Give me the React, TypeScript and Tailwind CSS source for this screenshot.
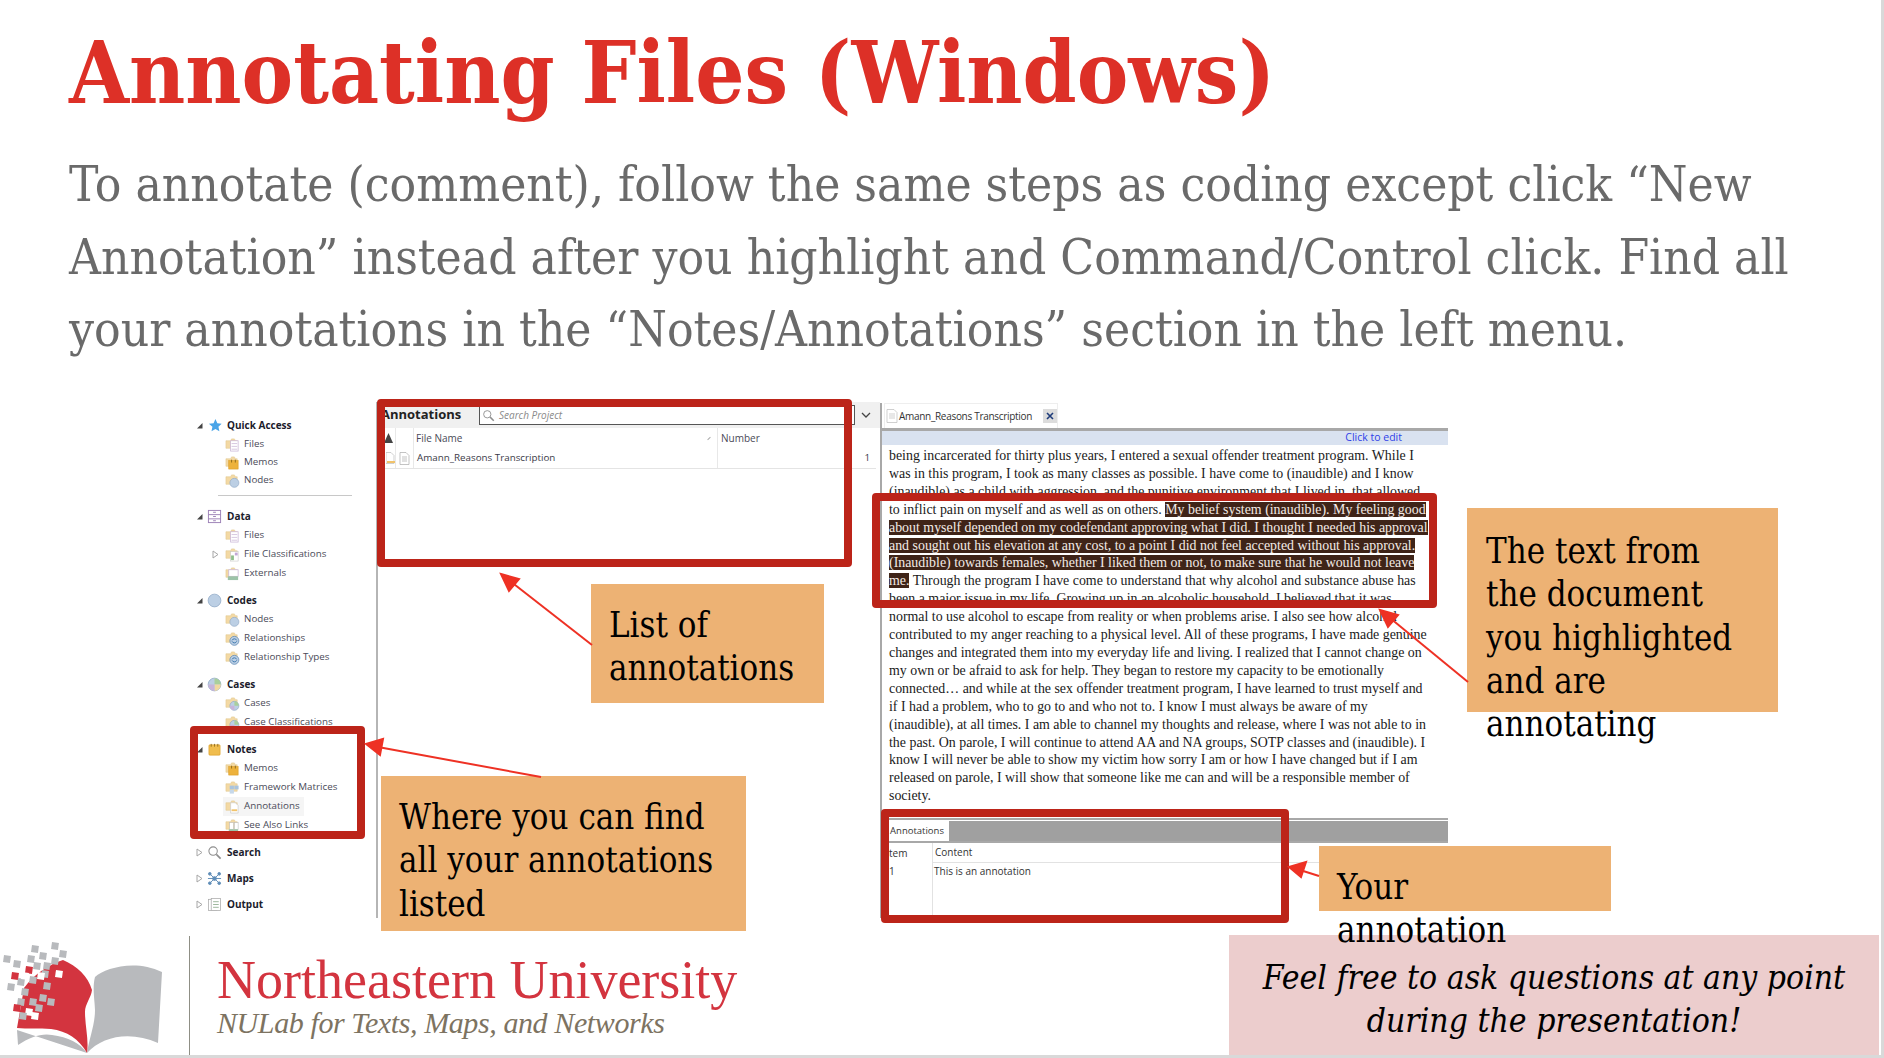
import React from "react";

const serif = "font-['Liberation_Serif',serif]";
const slide = "font-['DejaVu_Serif_Condensed','DejaVu_Serif',serif]";
const ui = "font-['Open_Sans',sans-serif]";

type IconKind =
  | "star"
  | "files"
  | "memo"
  | "node"
  | "cabinet"
  | "classes"
  | "external"
  | "circle"
  | "rel"
  | "pie"
  | "casefolder"
  | "notes"
  | "matrix"
  | "annot"
  | "links"
  | "search"
  | "maps"
  | "output";

const Folder = () => (
  <path d="M1 4h5l1-2h3l1 2h2v8H1z" fill="#f3d9a4" stroke="#e3c78e" strokeWidth="0.6" />
);

// small tree icons, rough copies of the NVivo ones
const NavIcon = ({ kind, size = 16 }: { kind: IconKind; size?: number }) => (
  <svg width={size} height={size} viewBox="0 0 16 16" className="shrink-0">
    {kind === "star" && (
      <path d="M9 1l2 4.6 4.6.5-3.4 3.2 1 4.7L9 11.6 4.800 14l1-4.700L2 6.100l5-.5z" fill="#4aa5e8" />
    )}
    {kind === "files" && (
      <>
        <Folder />
        <rect x="6" y="4" width="8" height="11" fill="#fff" stroke="#c9b5d6" strokeWidth="0.8" />
        <path d="M7 7h6M7 10h6M7 13h6" stroke="#c9b5d6" strokeWidth="0.8" />
      </>
    )}
    {kind === "memo" && (
      <>
        <Folder />
        <rect x="4" y="6" width="10" height="9" fill="#edb23c" stroke="#d99a22" strokeWidth="0.6" />
        <path d="M7 5v3M11 5v3" stroke="#8c6a1c" strokeWidth="1" />
      </>
    )}
    {kind === "node" && (
      <>
        <Folder />
        <circle cx="10" cy="10.500" r="4.800" fill="#bccfe4" stroke="#8fa8c6" strokeWidth="0.7" />
      </>
    )}
    {kind === "cabinet" && (
      <g fill="none" stroke="#9b7fb5" strokeWidth="1">
        <rect x="1.500" y="1.500" width="13" height="13" />
        <path d="M1.500 6h13M1.500 10.500h13M6.500 3.500h3M6.500 8h3M6.500 12.500h3" />
      </g>
    )}
    {kind === "classes" && (
      <>
        <Folder />
        <rect x="6" y="5" width="8" height="10" fill="#fff" stroke="#c5c5c5" strokeWidth="0.6" />
        <rect x="6.500" y="9" width="3" height="5" fill="#8fbf8b" />
        <rect x="10.500" y="6" width="3" height="3" fill="#c2a8d6" />
      </>
    )}
    {kind === "external" && (
      <>
        <Folder />
        <rect x="4" y="4" width="10" height="7" fill="#fff" stroke="#c9b5d6" strokeWidth="0.8" />
        <rect x="3" y="11" width="11" height="4" fill="#9cc3a8" />
      </>
    )}
    {kind === "circle" && <circle cx="8" cy="8" r="6.800" fill="#bccfe4" stroke="#8fa8c6" strokeWidth="0.8" />}
    {kind === "rel" && (
      <>
        <Folder />
        <circle cx="10" cy="10.500" r="4.800" fill="#bccfe4" stroke="#5c88b5" strokeWidth="0.8" />
        <path d="M7.500 10a2.700 2.700 0 0 1 5 0M12.500 11a2.700 2.700 0 0 1-5 0" fill="none" stroke="#3a76ad" strokeWidth="1" />
      </>
    )}
    {kind === "pie" && (
      <>
        <circle cx="8" cy="8" r="6.800" fill="#bccfe4" stroke="#8fa8c6" strokeWidth="0.8" />
        <path d="M8 8V1.200A6.800 6.800 0 0 1 14.800 8z" fill="#a9cf9c" />
        <path d="M8 8h6.800A6.800 6.800 0 0 1 8 14.800z" fill="#f1d9a0" />
        <path d="M8 8v6.800A6.800 6.800 0 0 1 1.200 8z" fill="#c8b4da" />
      </>
    )}
    {kind === "casefolder" && (
      <>
        <Folder />
        <circle cx="10" cy="10.500" r="4.800" fill="#bccfe4" stroke="#8fa8c6" strokeWidth="0.7" />
        <path d="M10 10.500V5.700a4.800 4.800 0 0 1 4.800 4.800z" fill="#a9cf9c" />
        <path d="M10 10.500v4.800a4.800 4.800 0 0 1-4.800-4.800z" fill="#c8b4da" />
      </>
    )}
    {kind === "notes" && (
      <>
        <rect x="2" y="3" width="12" height="11" rx="1" fill="#f0bd4e" stroke="#d99a22" strokeWidth="0.6" />
        <path d="M4.500 2v3M8 2v3M11.500 2v3" stroke="#8c6a1c" strokeWidth="0.9" />
      </>
    )}
    {kind === "matrix" && (
      <>
        <Folder />
        <rect x="5" y="6" width="4.500" height="4" fill="#a9c4df" />
        <rect x="10" y="6" width="4.500" height="4" fill="#a9c4df" />
        <rect x="5" y="10.500" width="4.500" height="4" fill="#c6d8ea" />
      </>
    )}
    {kind === "annot" && (
      <>
        <Folder />
        <path d="M6 4h5l3 3v8H6z" fill="#fff" stroke="#c9c9c9" strokeWidth="0.7" />
        <rect x="7" y="11" width="6" height="2" fill="#f1c36b" />
      </>
    )}
    {kind === "links" && (
      <>
        <Folder />
        <rect x="5" y="5" width="4" height="7" fill="#fff" stroke="#bbb" strokeWidth="0.6" />
        <rect x="10" y="5" width="4" height="7" fill="#fff" stroke="#bbb" strokeWidth="0.6" />
        <rect x="4" y="12" width="10" height="3" fill="#9cc3a8" />
      </>
    )}
    {kind === "search" && (
      <g fill="none" stroke="#8e8e8e">
        <circle cx="6.500" cy="6.500" r="4.500" strokeWidth="1.100" />
        <path d="M10 10l4.500 4.500" strokeWidth="1.800" />
      </g>
    )}
    {kind === "maps" && (
      <g stroke="#5f8db8" fill="#5f8db8" strokeWidth="1">
        <path d="M8 8L3 3M8 8l5-5M8 8l-5 5M8 8l5 5M8 8H1M8 8h7" />
        <circle cx="8" cy="8" r="2" />
        <circle cx="3" cy="3" r="1.400" />
        <circle cx="13" cy="3" r="1.400" />
        <circle cx="3" cy="13" r="1.400" />
        <circle cx="13" cy="13" r="1.400" />
      </g>
    )}
    {kind === "output" && (
      <g fill="#fff" stroke="#a9a9a9" strokeWidth="0.8">
        <rect x="1.500" y="2.500" width="9" height="12" />
        <rect x="4.500" y="1.500" width="10" height="13" />
        <path d="M6.500 5h6M6.500 8h6M6.500 11h6" stroke="#7fa27f" />
      </g>
    )}
  </svg>
);

const Caret = ({ open }: { open?: boolean }) =>
  open ? (
    <svg width="7" height="7" viewBox="0 0 7 7" className="shrink-0">
      <path d="M6.500 1v5.500H1z" fill="#444" />
    </svg>
  ) : (
    <svg width="7" height="9" viewBox="0 0 7 9" className="shrink-0">
      <path d="M1 1l5 3.500L1 8z" fill="#fff" stroke="#a6a6a6" />
    </svg>
  );

const NavHead = ({ icon, label, open }: { icon: IconKind; label: string; open?: boolean }) => (
  <div className="flex items-center h-[19px]">
    <span className="w-[11px] flex justify-start">
      <Caret open={open} />
    </span>
    <span className="w-[20px] flex justify-start">
      <NavIcon kind={icon} size={15} />
    </span>
    <span className="text-[10px] font-bold text-[#1c1c2c]">{label}</span>
  </div>
);

const NavChild = ({
  icon,
  label,
  caret,
  active,
  tight,
}: {
  icon: IconKind;
  label: string;
  caret?: boolean;
  active?: boolean;
  tight?: boolean;
}) => (
  <div className={`flex items-center pl-[16px] ${tight ? "h-[18px]" : "h-[19px]"}`}>
    <span className="w-[11px]">{caret && <Caret />}</span>
    <span className={`flex items-center h-full pr-[4px] text-[9.800px] text-[#4a4a58] ${active ? "bg-[#f5f5f5]" : ""}`}>
      <span className="w-[21px] pl-[2px] flex">
        <NavIcon kind={icon} size={15} />
      </span>
      {label}
    </span>
  </div>
);

const Sidebar = () => (
  <div className={`w-[180px] pl-[6px] pt-[24px] flex flex-col shrink-0 ${ui}`}>
    <NavHead icon="star" label="Quick Access" open />
    <NavChild icon="files" label="Files" tight />
    <NavChild icon="memo" label="Memos" tight />
    <NavChild icon="node" label="Nodes" tight />
    <div className="h-px w-[134px] ml-[22px] bg-[#c8c8c8] mt-[6px] mb-[11px]" />
    <NavHead icon="cabinet" label="Data" open />
    <NavChild icon="files" label="Files" />
    <NavChild icon="classes" label="File Classifications" caret />
    <NavChild icon="external" label="Externals" />
    <div className="h-[8px]" />
    <NavHead icon="circle" label="Codes" open />
    <NavChild icon="node" label="Nodes" />
    <NavChild icon="rel" label="Relationships" />
    <NavChild icon="rel" label="Relationship Types" />
    <div className="h-[8px]" />
    <NavHead icon="pie" label="Cases" open />
    <NavChild icon="casefolder" label="Cases" />
    <NavChild icon="casefolder" label="Case Classifications" />
    <div className="h-[8px]" />
    <NavHead icon="notes" label="Notes" open />
    <NavChild icon="memo" label="Memos" />
    <NavChild icon="matrix" label="Framework Matrices" />
    <NavChild icon="annot" label="Annotations" active />
    <NavChild icon="links" label="See Also Links" />
    <div className="h-[8px]" />
    <NavHead icon="search" label="Search" />
    <div className="h-[7px]" />
    <NavHead icon="maps" label="Maps" />
    <div className="h-[7px]" />
    <NavHead icon="output" label="Output" />
  </div>
);

const ListPanel = () => (
  <div className={`w-[504px] h-[516px] shrink-0 border-l-2 border-[#b5b5b5] mt-[10px] ${ui}`}>
    <div className="h-[26px] bg-[#f0f0f0] flex items-center">
      <span className="w-[101px] pl-[3px] text-[13px] font-bold text-[#222]">Annotations</span>
      <div className="w-[376px] h-[20px] border border-[#555] bg-white flex items-center pl-[2px] gap-[4px]">
        <NavIcon kind="search" size={13} />
        <span className="italic text-[10px] text-[#8a8a8a]">Search Project</span>
      </div>
      <svg width="10" height="6" viewBox="0 0 10 6" className="ml-[6px]">
        <path d="M1 1l4 4 4-4" fill="none" stroke="#444" strokeWidth="1.300" />
      </svg>
    </div>
    <div className="flex h-[21px] w-[498px] items-center text-[10px] text-[#4a4a58]">
      <span className="w-[18px] h-full border-r border-[#e8e8e8] flex items-center justify-end pr-[2px]">
        <svg width="9" height="11" viewBox="0 0 9 11">
          <path d="M4.500 0L9 10H0z" fill="#444" />
        </svg>
      </span>
      <span className="w-[18px] h-full border-r border-[#e8e8e8]" />
      <span className="w-[304px] h-full pl-[2px] pr-[6px] border-r border-[#e8e8e8] flex items-center justify-between">
        File Name
        <span className="w-[4px] h-px bg-[#aaa] -rotate-45" />
      </span>
      <span className="pl-[3px]">Number</span>
    </div>
    <div className="flex h-[20px] w-[498px] items-center text-[9.800px] text-[#3a3a48] border-b border-[#e4e4e4]">
      <span className="w-[18px] h-full border-r border-[#e8e8e8] flex items-center justify-end">
        <svg width="9" height="13" viewBox="0 0 9 13">
          <path d="M0 .5h5l3 3v8H0z" fill="#fff" stroke="#bbb" strokeWidth="0.7" />
          <rect x="1" y="9" width="8" height="2" fill="#f1c36b" />
        </svg>
      </span>
      <span className="w-[18px] h-full border-r border-[#e8e8e8] flex items-center justify-center">
        <svg width="11" height="13" viewBox="0 0 11 13">
          <path d="M1 .5h6l3 3v9H1zM3 5h5M3 7h5M3 9h5" fill="#fff" stroke="#aaa" strokeWidth="0.7" />
        </svg>
      </span>
      <span className="w-[304px] h-full pl-[3px] border-r border-[#e8e8e8] flex items-center">Amann_Reasons Transcription</span>
      <span className="flex-1 text-right pr-[6px]">1</span>
    </div>
  </div>
);

const hl = "bg-[#3f2418] text-[#f3ebe6]";

const DocLines = () => (
  <div className={`pl-[7px] text-[13.900px] leading-[17.900px] text-[#1a1a1a] whitespace-nowrap ${serif}`}>
    <div>being incarcerated for thirty plus years, I entered a sexual offender treatment program. While I</div>
    <div>was in this program, I took as many classes as possible. I have come to (inaudible) and I know</div>
    <div>(inaudible) as a child with aggression, and the punitive environment that I lived in, that allowed</div>
    <div>
      to inflict pain on myself and as well as on others. <span className={hl}>My belief system (inaudible). My feeling good</span>
    </div>
    <div>
      <span className={hl}>about myself depended on my codefendant approving what I did. I thought I needed his approval</span>
    </div>
    <div>
      <span className={hl}>and sought out his elevation at any cost, to a point I did not feel accepted without his approval.</span>
    </div>
    <div>
      <span className={hl}>(Inaudible) towards females, whether I liked them or not, to make sure that he would not leave</span>
    </div>
    <div>
      <span className={hl}>me.</span> Through the program I have come to understand that why alcohol and substance abuse has
    </div>
    <div>been a major issue in my life. Growing up in an alcoholic household, I believed that it was</div>
    <div>normal to use alcohol to escape from reality or when problems arise. I also see how alcohol</div>
    <div>contributed to my anger reaching to a physical level. All of these programs, I have made genuine</div>
    <div>changes and integrated them into my everyday life and living. I realized that I cannot change on</div>
    <div>my own or be afraid to ask for help. They began to restore my capacity to be emotionally</div>
    <div>connected… and while at the sex offender treatment program, I have learned to trust myself and</div>
    <div>if I had a problem, who to go to and who not to. I know I must always be aware of my</div>
    <div>(inaudible), at all times. I am able to channel my thoughts and release, where I was not able to in</div>
    <div>the past. On parole, I will continue to attend AA and NA groups, SOTP classes and (inaudible). I</div>
    <div>know I will never be able to show my victim how sorry I am or how I have changed but if I am</div>
    <div>released on parole, I will show that someone like me can and will be a responsible member of</div>
    <div>society.</div>
  </div>
);

const DocPanel = () => (
  <div className={`w-[568px] h-[515px] shrink-0 border-l-2 border-[#a8a8a8] mt-[11px] flex flex-col ${ui}`}>
    <div className="h-[25px] pl-[2px] flex items-end">
      <div className="w-[174px] h-[25px] bg-white border border-[#eee] border-b-0 flex items-center pl-[1px] text-[10px] text-[#333] tracking-[-0.3px]">
        <svg width="12" height="14" viewBox="0 0 12 14" className="mr-[1px] shrink-0">
          <path d="M1 .5h7l3 3v10H1zM3 5h6M3 7h6M3 9h6" fill="#fff" stroke="#bbb" strokeWidth="0.7" />
        </svg>
        <span className="w-[144px]">Amann_Reasons Transcription</span>
        <span className="w-[14px] h-[14px] bg-[#dcdcdc] flex items-center justify-center">
          <svg width="8" height="8" viewBox="0 0 8 8">
            <path d="M1 1l6 6M7 1L1 7" stroke="#1f3c7a" strokeWidth="1.600" />
          </svg>
        </span>
      </div>
    </div>
    <div className="h-[3px] bg-[#a8a8a8]" />
    <div className="h-[14px] bg-[#d9e2f0] flex items-center justify-end pr-[46px] text-[10.500px] text-[#2f3fe8]">Click to edit</div>
    <div className="h-[2px]" />
    <DocLines />
    <div className="h-[13px]" />
    <div className="h-[2px] bg-[#a8a8a8]" />
    <div className="h-[1px]" />
    <div className="h-[20px] flex bg-[#a0a0a0]">
      <div className="w-[67px] bg-white flex items-center justify-center pl-[3px] text-[9.500px] text-[#333]">Annotations</div>
    </div>
    <div className="h-[2px] bg-[#a8a8a8]" />
    <div className="flex-1 flex">
      <div className="w-[51px] border-r border-[#e2e2e2] pl-[7px] text-[10px] text-[#333]">
        <div className="h-[20px] flex items-center">tem</div>
        <div className="h-[17px] flex items-center">1</div>
      </div>
      <div className="flex-1 text-[10px] text-[#333]">
        <div className="h-[20px] flex items-center pl-[2px] border-b border-[#e2e2e2]">Content</div>
        <div className="h-[17px] flex items-center pl-[1px]">This is an annotation</div>
      </div>
    </div>
  </div>
);

const RedBox = ({ className }: { className: string }) => (
  <div className={`absolute border-[8px] border-[#bc2419] rounded-[4px] ${className}`} />
);

const Callout = ({ className, lines }: { className: string; lines: string[] }) => (
  <div className={`absolute bg-[#edb274] text-black text-[34.500px] leading-[43.300px] ${slide} ${className}`}>
    {lines.map((line) => (
      <div key={line} className="whitespace-nowrap">
        {line}
      </div>
    ))}
  </div>
);

const Arrows = () => (
  <svg width="1884" height="1058" viewBox="0 0 1884 1058" className="absolute left-0 top-0 pointer-events-none z-10">
    <g stroke="#ee3124" strokeWidth="2" fill="#ee3124">
      <path d="M592 645L510 581" />
      <path d="M501 574L519 579L509 591Z" />
      <path d="M541 777L378 747" />
      <path d="M366 744L383 739L380 755Z" />
      <path d="M1468 682L1390 618" />
      <path d="M1380 610L1398 615L1388 627Z" />
      <path d="M1319 876L1300 870" />
      <path d="M1289 867L1306 862L1301 877Z" />
    </g>
  </svg>
);

const pixels: [number, number, string][] = [
  [32, 945, "#b8babd"], [52, 942, "#b8babd"], [4, 955, "#b8babd"], [14, 960, "#b8babd"], [28, 955, "#b8babd"],
  [40, 952, "#b8babd"], [52, 957, "#b8babd"], [60, 950, "#b8babd"], [26, 966, "#d3343f"], [12, 972, "#d3343f"],
  [34, 962, "#b8babd"], [44, 962, "#b8babd"], [18, 978, "#b8babd"], [30, 976, "#b8babd"], [42, 970, "#b8babd"],
  [50, 966, "#d3343f"], [56, 970, "#ffffff"], [8, 983, "#b8babd"], [22, 988, "#b8babd"], [34, 986, "#d3343f"],
  [44, 982, "#b8babd"], [18, 998, "#b8babd"], [30, 998, "#b8babd"], [40, 994, "#b8babd"], [14, 1004, "#d3343f"],
  [26, 1008, "#ffffff"], [36, 1004, "#b8babd"], [48, 998, "#b8babd"], [32, 1012, "#ffffff"], [20, 1012, "#b8babd"],
  [38, 972, "#ffffff"], [22, 972, "#ffffff"],
];

const Logo = () => (
  <svg width="170" height="119" viewBox="0 936 170 119" className="shrink-0">
    <path d="M17 1030l1 15c12-8 24-12 34-10 16 2 28 8 35 18z" fill="#b8babd" />
    <path d="M95 977c10-9 40-18 67-5l-4 71c-26-12-55-8-71 10 2-14 8-28 8-43 0-8-3-22 0-33z" fill="#b8babd" />
    <path d="M17 1028l7-40c10-14 26-24 39-28 14 6 25 16 29 30-1 8-7 14-7 22 0 14 4 28 2 41-8-14-20-22-36-24-12-1-24 0-34-1z" fill="#d3343f" />
    {pixels.map(([x, y, fill]) => (
      <rect key={`${x}-${y}`} x={x} y={y} width="7" height="7" fill={fill} transform={`rotate(8 ${x} ${y})`} />
    ))}
  </svg>
);

const Footer = () => (
  <div className="flex h-[119px] items-stretch">
    <Logo />
    <div className="w-px bg-[#8f8f85] ml-[19px]" />
    <div className={`pl-[27px] pt-[16px] ${serif}`}>
      <div className="text-[54px] leading-[56px] text-[#d3343f] whitespace-nowrap">Northeastern University</div>
      <div className="text-[30px] leading-[30px] tracking-[-0.4px] italic text-[#7d7361] whitespace-nowrap">NULab for Texts, Maps, and Networks</div>
    </div>
  </div>
);

export default function App() {
  return (
    <div className="relative w-[1884px] h-[1058px] overflow-hidden bg-white">
      <div className={`h-[392px] pl-[69px] ${slide}`}>
        <h1 className="pt-[18px] h-[148px] text-[#dd3027] text-[86px] leading-[110px] font-bold whitespace-nowrap">
          Annotating Files (Windows)
        </h1>
        <p className="text-[#6a6a6a] text-[49.200px] leading-[72.500px]">
          <span className="block whitespace-nowrap">To annotate (comment), follow the same steps as coding except click “New</span>
          <span className="block whitespace-nowrap">Annotation” instead after you highlight and Command/Control click. Find all</span>
          <span className="block whitespace-nowrap">your annotations in the “Notes/Annotations” section in the left menu.</span>
        </p>
      </div>
      <div className="flex h-[544px] pl-[190px] items-start">
        <Sidebar />
        <div className="w-[6px]" />
        <ListPanel />
        <DocPanel />
      </div>
      <Footer />
      <div className="absolute left-0 right-0 bottom-0 h-[3px] bg-[#d9d9d9]" />
      <div className="absolute top-0 bottom-0 right-0 w-[3px] bg-[#d9d9d9]" />

      <RedBox className="left-[377px] top-[399px] w-[475px] h-[168px]" />
      <RedBox className="left-[190px] top-[726px] w-[175px] h-[113px]" />
      <RedBox className="left-[872px] top-[493px] w-[565px] h-[115px]" />
      <RedBox className="left-[881px] top-[809px] w-[408px] h-[114px]" />

      <Callout className="left-[591px] top-[584px] w-[233px] h-[119px] pl-[18px] pt-[20px]" lines={["List of", "annotations"]} />
      <Callout className="left-[381px] top-[776px] w-[365px] h-[155px] pl-[18px] pt-[20px]" lines={["Where you can find", "all your annotations", "listed"]} />
      <Callout className="left-[1467px] top-[508px] w-[311px] h-[204px] pl-[19px] pt-[22px]" lines={["The text from", "the document", "you highlighted", "and are", "annotating"]} />

      <div className="absolute left-[1229px] top-[935px] w-[650px] h-[120px] bg-[#eccdcd] text-center pt-[21px] text-[33.400px] leading-[43.300px] italic text-black">
        <div className={slide}>
          <div>Feel free to ask questions at any point</div>
          <div>during the presentation!</div>
        </div>
      </div>
      <Callout className="left-[1319px] top-[846px] w-[292px] h-[65px] pl-[18px] pt-[20px] z-10" lines={["Your", "annotation"]} />
      <Arrows />
    </div>
  );
}
